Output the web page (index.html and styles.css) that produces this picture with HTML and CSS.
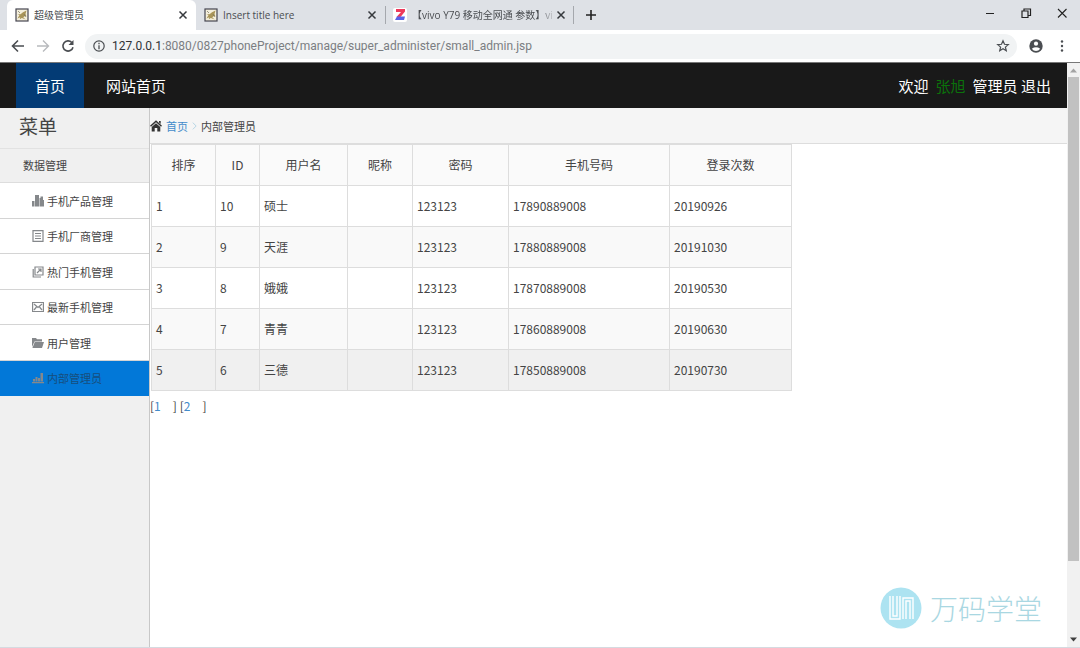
FILE: index.html
```html
<!DOCTYPE html>
<html lang="zh-CN">
<head>
<meta charset="utf-8">
<title>超级管理员</title>
<link rel="stylesheet" href="styles.css">
</head>
<body>
<svg class="defs" aria-hidden="true">
  <symbol id="cat" viewBox="0 0 14 14">
    <rect x="1" y="1" width="12" height="12" fill="#f4efdc" stroke="#454550" stroke-width="1.2"/>
    <path d="M2.500 10.500l2-3.500-2-1 3 .2L8 4.200 11.500 2.500l-1 3.500 1 2.500-2-.6-1.200 1.500 2.500 2-4-1.300-2 1.100.4-2z" fill="#a99558"/>
    <path d="M3 3l2 2M9 6l1.500 3" stroke="#77725c" stroke-width=".7"/>
  </symbol>
  <symbol id="close" viewBox="0 0 10 10"><path d="M1.500 1.500l7 7M8.500 1.500l-7 7" fill="none" stroke="currentColor" stroke-width="1.500"/></symbol>
</svg>

<header class="browser">
  <div class="tabs">
    <div class="tab tab-active">
      <svg class="favicon"><use href="#cat"/></svg>
      <span class="tab-title">超级管理员</span>
      <button class="tab-close" aria-label="关闭"><svg><use href="#close"/></svg></button>
    </div>
    <div class="tab">
      <svg class="favicon"><use href="#cat"/></svg>
      <span class="tab-title">Insert title here</span>
      <button class="tab-close" aria-label="关闭"><svg><use href="#close"/></svg></button>
    </div>
    <div class="tab tab-ruled">
      <svg class="favicon" viewBox="0 0 14 14"><rect width="14" height="14" rx="2" fill="#fff"/><path d="M3 1h9v2.500L7.500 9H3.500L8 4H3z" fill="#ee3a5b"/><path d="M4 8.500h8L11 12H2z" fill="#5a62e8"/></svg>
      <span class="tab-title tab-fade">【vivo Y79 移动全网通 参数】vi</span>
      <button class="tab-close" aria-label="关闭"><svg><use href="#close"/></svg></button>
    </div>
    <button class="tab-new" aria-label="新标签页"><svg viewBox="0 0 12 12"><path d="M6 1v10M1 6h10" stroke="currentColor" stroke-width="1.600"/></svg></button>
    <div class="window-buttons">
      <button aria-label="最小化"><svg viewBox="0 0 12 12"><path d="M2 6.500h8" stroke="currentColor"/></svg></button>
      <button aria-label="还原"><svg viewBox="0 0 12 12"><path d="M2 4h6v6.500H2zM4 4V2h6.500v6.500H8" fill="none" stroke="currentColor" stroke-width="1.200"/></svg></button>
      <button aria-label="关闭窗口"><svg viewBox="0 0 12 12"><path d="M2 2l8.500 8.500M10.500 2L2 10.500" stroke="currentColor" stroke-width="1.100"/></svg></button>
    </div>
  </div>
  <div class="toolbar">
    <button aria-label="后退"><svg viewBox="0 0 14 14"><path d="M13 7H2M7 1.500L1.500 7 7 12.500" fill="none" stroke="currentColor" stroke-width="1.600"/></svg></button>
    <button class="dim" aria-label="前进"><svg viewBox="0 0 14 14"><path d="M1 7h11M7 1.500L12.500 7 7 12.500" fill="none" stroke="currentColor" stroke-width="1.400"/></svg></button>
    <button aria-label="刷新"><svg viewBox="0 0 14 14"><path d="M12 8.200A5.100 5.100 0 1 1 10.800 3.500" fill="none" stroke="currentColor" stroke-width="1.600"/><path d="M12.500 1v5h-5z" fill="currentColor"/></svg></button>
    <div class="address">
      <svg class="info" viewBox="0 0 14 14"><circle cx="7" cy="7" r="5.200" fill="none" stroke="currentColor" stroke-width="1.200"/><path d="M7 6.200v4M7 3.800v1.400" stroke="currentColor" stroke-width="1.300"/></svg>
      <label for="url">127.0.0.1</label>
      <input id="url" type="text" value=":8080/0827phoneProject/manage/super_administer/small_admin.jsp">
      <button aria-label="收藏"><svg viewBox="0 0 14 14"><path d="M7 1.800l1.500 3.500 3.800.3-2.900 2.500.9 3.700L7 9.800l-3.300 2 .9-3.700L1.700 5.600l3.800-.3z" fill="none" stroke="currentColor" stroke-width="1.200"/></svg></button>
    </div>
    <button class="account" aria-label="账户"><svg viewBox="0 0 14 14"><circle cx="7" cy="7" r="6.700" fill="currentColor"/><circle cx="7" cy="4.700" r="2.100" fill="#fff"/><path d="M2.800 9.700Q7 6.800 11.200 9.700 9.600 12 7 12T2.800 9.700z" fill="#fff"/></svg></button>
    <button class="more" aria-label="更多"><svg viewBox="0 0 14 14"><circle cx="7" cy="2.500" r="1.200"/><circle cx="7" cy="7" r="1.200"/><circle cx="7" cy="11.500" r="1.200"/></svg></button>
  </div>
</header>

<div class="viewport">
  <div class="page">
    <nav class="topbar">
      <a class="top-link top-current" href="#">首页</a>
      <a class="top-link" href="#">网站首页</a>
      <div class="welcome"><span>欢迎</span><span class="user">张旭</span><span>管理员 <a href="#">退出</a></span></div>
    </nav>
    <div class="columns">
      <aside class="sidebar">
        <h1>菜单</h1>
        <h2>数据管理</h2>
        <ul>
          <li><a href="#"><svg viewBox="0 0 12 12"><path d="M0 6h2.500v5.500H0zM3 0h4v11.500H3zM7.500 3h1V1.500H11V5h1v6.500H7.500z"/></svg>手机产品管理</a></li>
          <li><a href="#"><svg viewBox="0 0 12 12"><path d="M1 .6h10v10.800H1zM3 3.500h6M3 6h6M3 8.500h6" class="line"/></svg>手机厂商管理</a></li>
          <li><a href="#"><svg viewBox="0 0 12 12"><path d="M3 1h8v8H3zM1.200 3v8H9M5 7l4-4M6 3h3v3" class="line"/></svg>热门手机管理</a></li>
          <li><a href="#"><svg viewBox="0 0 12 12"><path d="M.6 1.500h10.800v9H.6zM2 3l4 3.500L10 3M2 9l2.500-3M10 9L7.500 6" class="line"/></svg>最新手机管理</a></li>
          <li><a href="#"><svg viewBox="0 0 12 12"><path d="M0 10V1h4l1 1.300h5V4.500H2.500zM2.800 5H12L10 11H.4z"/></svg>用户管理</a></li>
          <li class="selected"><a href="#"><svg viewBox="0 0 12 12"><path d="M0 10h12v1.300H0zM1 7h2v2.500H1zM3.500 5h2v4.500h-2zM6 6h2v3.500H6zM8.500 1H11v8.500H8.500z"/></svg>内部管理员</a></li>
        </ul>
      </aside>
      <main class="content">
        <div class="crumbs">
          <svg class="home" viewBox="0 0 12 12"><path d="M6 .3l6 5.500-1 1L6 2.300 1 6.800l-1-1zM6 3.300l4.300 3.800v4.400H7.300V8H4.700v3.500H1.700V7.100zM9 1h1.700v3L9 2.500z"/></svg>
          <a href="#">首页</a>
          <svg class="chevron" viewBox="0 0 6 10"><path d="M1 1l4 4-4 4" fill="none" stroke="#a8cfe2"/></svg>
          <span>内部管理员</span>
        </div>
        <table>
          <colgroup><col class="c-rank"><col class="c-id"><col class="c-name"><col class="c-nick"><col class="c-pass"><col class="c-phone"><col class="c-count"></colgroup>
          <thead><tr><th>排序</th><th>ID</th><th>用户名</th><th>昵称</th><th>密码</th><th>手机号码</th><th>登录次数</th></tr></thead>
          <tbody>
            <tr><td>1</td><td>10</td><td>硕士</td><td></td><td>123123</td><td>17890889008</td><td>20190926</td></tr>
            <tr><td>2</td><td>9</td><td>天涯</td><td></td><td>123123</td><td>17880889008</td><td>20191030</td></tr>
            <tr><td>3</td><td>8</td><td>娥娥</td><td></td><td>123123</td><td>17870889008</td><td>20190530</td></tr>
            <tr><td>4</td><td>7</td><td>青青</td><td></td><td>123123</td><td>17860889008</td><td>20190630</td></tr>
            <tr class="hovered"><td>5</td><td>6</td><td>三德</td><td></td><td>123123</td><td>17850889008</td><td>20190730</td></tr>
          </tbody>
        </table>
        <div class="pager"><span>[<a href="#">1</a>]</span><span>[<a href="#">2</a>]</span></div>
      </main>
    </div>
  </div>
  <div class="scrollbar">
    <svg viewBox="0 0 13 14"><path d="M3 9.500h7L6.500 5.500z" fill="#a3a3a3"/></svg>
    <div class="track"><div class="thumb"></div></div>
    <svg viewBox="0 0 13 14"><path d="M3 4.500h7L6.500 8.500z" fill="#404040"/></svg>
  </div>
  <div class="watermark">
    <svg viewBox="0 0 42 42"><circle cx="21" cy="21" r="20.500" fill="#ade3f1"/><path d="M10 9v23h10V9M13 9v20h4V9M23 32V11h10v21M26 32V14h4v18" fill="none" stroke="#fff" stroke-width="1.400"/></svg>
    <span>万码学堂</span>
  </div>
</div>
</body>
</html>
```
FILE: styles.css
```css
* { box-sizing: border-box; }
body {
  margin: 0;
  height: 100vh;
  display: flex;
  flex-direction: column;
  overflow: hidden;
  background: #fff;
  color: #444;
  font: 12px/20px "Noto Sans CJK SC", "Noto Sans", sans-serif;
}
a { color: inherit; text-decoration: none; }
button {
  display: flex;
  align-items: center;
  justify-content: center;
  padding: 0;
  border: 0;
  background: none;
  color: inherit;
}
svg { display: block; flex: none; }
.defs { position: absolute; width: 0; height: 0; }

/* browser frame */
.browser { flex: none; border-bottom: 1px solid #777; color: #4a4d51; }
.tabs { display: flex; height: 30px; padding-left: 7px; background: #dee1e6; }
.tab {
  display: flex;
  align-items: center;
  width: 189px;
  padding: 0 8px;
  font: 10px/20px "Open Sans", "Noto Sans CJK SC", sans-serif;
}
.tab-active { background: #fff; border-radius: 6px 6px 0 0; }
.tab-ruled {
  background: linear-gradient(#a5a8ad, #a5a8ad) 0 center / 1px 18px no-repeat,
    linear-gradient(#a5a8ad, #a5a8ad) right center / 1px 18px no-repeat;
}
.favicon { width: 14px; height: 14px; margin-right: 5px; }
.tab-title { flex: 1; min-width: 0; white-space: nowrap; }
.tab-fade { mask-image: linear-gradient(to right, #000 88%, transparent); }
.tab-close { width: 10px; height: 16px; color: #36393d; }
.tab-close svg { width: 10px; height: 10px; }
.tab-new { width: 34px; }
.tab-new svg { width: 12px; height: 12px; }
.tab-new, .window-buttons { color: #222; }
.window-buttons { display: flex; height: 26px; margin-left: auto; }
.window-buttons button { width: 36px; }
.window-buttons svg { width: 12px; height: 12px; }
.toolbar { display: flex; align-items: center; height: 32px; padding: 0 8px 0 5px; }
.toolbar > button { width: 25px; }
.toolbar > button svg { width: 14px; height: 14px; }
.toolbar .dim { color: #b8babd; }
.toolbar .more { width: 20px; margin-left: 4px; fill: currentColor; }
.toolbar .account { margin-left: 6px; }
.address {
  flex: 1;
  display: flex;
  align-items: center;
  height: 25px;
  margin-left: 5px;
  padding: 0 7px;
  border-radius: 13px;
  background: #f1f3f4;
  font: 12px/20px Roboto, sans-serif;
}
.info, .address button svg { width: 14px; height: 14px; }
.info { margin-right: 6px; }
.address label { color: #303236; }
.address input {
  flex: 1;
  min-width: 0;
  padding: 0;
  border: 0;
  background: none;
  color: #7b7e82;
  font: inherit;
}

/* page */
.viewport { position: relative; flex: 1; display: flex; min-height: 0; border-bottom: 1px solid #d5dae0; }
.page { flex: 1; display: flex; flex-direction: column; min-width: 0; }
.topbar {
  display: flex;
  align-items: center;
  height: 45px;
  padding: 0 16px;
  background: #191919;
  color: #fff;
  font-size: 15px;
}
.top-link { padding: 0 22px; line-height: 45px; }
.top-current { padding: 0 19px; background: #033b75; }
.welcome { display: flex; gap: 7px; margin-left: auto; }
.user { color: #0b720b; }
.columns { flex: 1; display: flex; }
.sidebar { width: 150px; border-right: 1px solid #c8c8c8; background: #f0f0f0; font-size: 11px; }
.sidebar h1 { margin: 0; padding-left: 19px; font-size: 19px; font-weight: 400; line-height: 36px; height: 41px; border-bottom: 1px solid #e2e2e2; }
.sidebar h2 { margin: 0; padding-left: 23px; font-size: 11px; font-weight: 400; line-height: 33px; border-bottom: 1px solid #ddd; }
.sidebar ul { margin: 0; padding: 0; list-style: none; }
.sidebar li { height: 36px; border-bottom: 1px solid #d4d4d4; background: #fff; }
.sidebar li:nth-child(even) { height: 35px; }
.sidebar li a { display: flex; align-items: center; gap: 3px; height: 100%; padding-left: 32px; }
.sidebar li svg { width: 12px; height: 12px; fill: #85888b; }
.sidebar .line { fill: none; stroke: #85888b; stroke-width: 1.200; }
.sidebar .selected { border-color: #0278d8; background: #0278d8; color: #174e7c; }
.content { flex: 1; min-width: 0; }
.crumbs {
  display: flex;
  align-items: center;
  gap: 4px;
  height: 36px;
  border-bottom: 1px solid #ddd;
  background: #f5f5f5;
  font-size: 11px;
}
.crumbs a, .pager a { color: #428bca; }
.home { width: 12px; height: 12px; fill: #333; }
.chevron { width: 5px; height: 10px; }
table { table-layout: fixed; width: 641px; margin-left: 1px; border-collapse: collapse; }
th, td { height: 41px; padding: 0 4px; border: 1px solid #ddd; font-weight: 400; }
td { text-align: left; }
thead tr { background: #fafafa; }
tbody tr:nth-child(even) { background: #f9f9f9; }
tbody .hovered { background: #f0f0f0; }
.c-rank { width: 64px; }
.c-id { width: 44px; }
.c-name { width: 88px; }
.c-nick { width: 65px; }
.c-pass { width: 96px; }
.c-phone { width: 161px; }
.c-count { width: 122px; }
.pager { display: flex; gap: 3px; padding-top: 5px; }
.pager a { margin-right: 12px; }

.scrollbar { display: flex; flex-direction: column; width: 13px; background: #f1f1f1; }
.scrollbar svg { width: 13px; height: 14px; }
.track { flex: 1; padding: 0 1px; }
.thumb { height: 87%; background: #c1c1c1; }

.watermark {
  position: absolute;
  right: 38px;
  bottom: 18px;
  display: flex;
  align-items: center;
  gap: 8px;
  color: #a9d7e2;
  font-size: 28px;
  font-weight: 300;
  line-height: 42px;
}
.watermark svg { width: 42px; height: 42px; }
```
